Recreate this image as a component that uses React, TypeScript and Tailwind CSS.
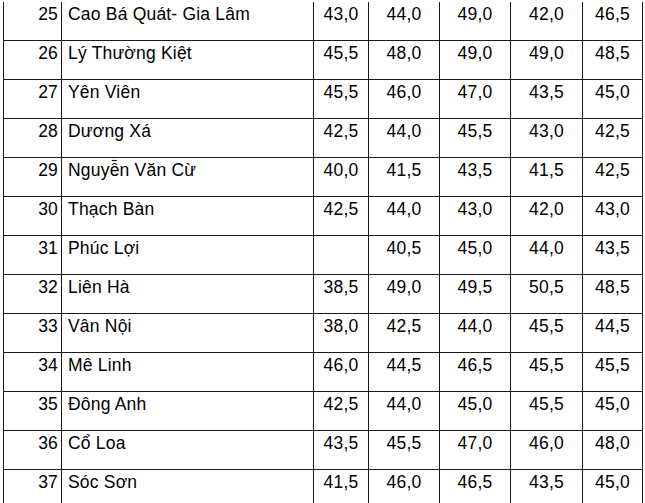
const rows: [number, string, string[]][] = [
  [25, 'Cao Bá Quát- Gia Lâm', ['43,0', '44,0', '49,0', '42,0', '46,5']],
  [26, 'Lý Thường Kiệt', ['45,5', '48,0', '49,0', '49,0', '48,5']],
  [27, 'Yên Viên', ['45,5', '46,0', '47,0', '43,5', '45,0']],
  [28, 'Dương Xá', ['42,5', '44,0', '45,5', '43,0', '42,5']],
  [29, 'Nguyễn Văn Cừ', ['40,0', '41,5', '43,5', '41,5', '42,5']],
  [30, 'Thạch Bàn', ['42,5', '44,0', '43,0', '42,0', '43,0']],
  [31, 'Phúc Lợi', ['', '40,5', '45,0', '44,0', '43,5']],
  [32, 'Liên Hà', ['38,5', '49,0', '49,5', '50,5', '48,5']],
  [33, 'Vân Nội', ['38,0', '42,5', '44,0', '45,5', '44,5']],
  [34, 'Mê Linh', ['46,0', '44,5', '46,5', '45,5', '45,5']],
  [35, 'Đông Anh', ['42,5', '44,0', '45,0', '45,5', '45,0']],
  [36, 'Cổ Loa', ['43,5', '45,5', '47,0', '46,0', '48,0']],
  [37, 'Sóc Sơn', ['41,5', '46,0', '46,5', '43,5', '45,0']],
];

export default function App() {
  return (
    <div
      className="h-[503px] w-[645px] overflow-hidden bg-white pl-[3px] pt-[2px] text-[17.5px] leading-[20px] tracking-[0.2px] text-black"
      style={{ fontFamily: '"Liberation Sans", Arial, sans-serif' }}
    >
      <div className="w-[640px] border-l border-[#1a1a1a]">
        {rows.map(([no, name, scores]) => (
          <div
            key={no}
            className="grid h-[39px] grid-cols-[58px_252px_55px_71px_71px_72px_60px] border-b border-[#1a1a1a]"
          >
            <div className="border-r border-[#1a1a1a] pr-[3px] pt-[2px] text-right">{no}</div>
            <div className="border-r border-[#1a1a1a] pl-[6px] pt-[2px]">{name}</div>
            {scores.map((s, i) => (
              <div key={i} className="border-r border-[#1a1a1a] pt-[2px] text-center">
                {s}
              </div>
            ))}
          </div>
        ))}
      </div>
    </div>
  );
}
